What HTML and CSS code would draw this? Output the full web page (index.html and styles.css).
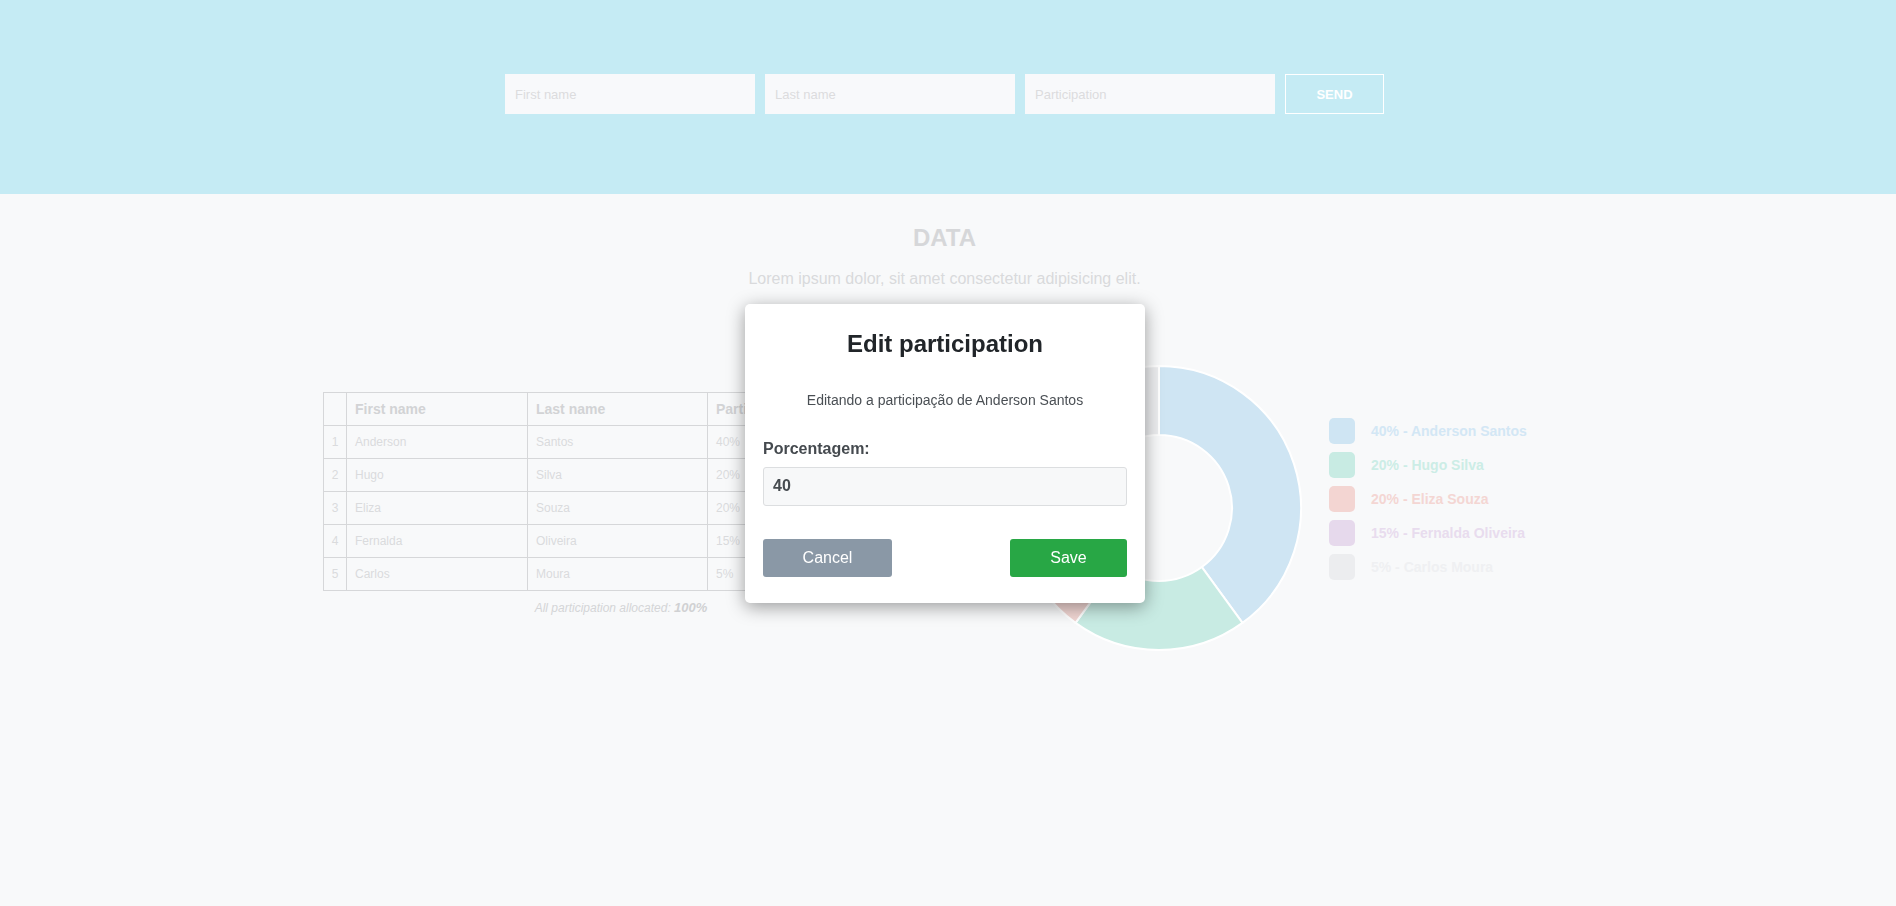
FILE: index.html
```html
<!DOCTYPE html>
<html lang="en">
<head>
<meta charset="utf-8">
<title>Participation</title>
<link rel="stylesheet" href="styles.css">
</head>
<body>
<header class="top">
  <form class="entry">
    <input class="field" type="text" placeholder="First name">
    <input class="field" type="text" placeholder="Last name">
    <input class="field" type="text" placeholder="Participation">
    <button class="send" type="button">SEND</button>
  </form>
</header>

<main class="main">
  <h1 class="title">DATA</h1>
  <p class="lead">Lorem ipsum dolor, sit amet consectetur adipisicing elit.</p>

  <div class="row">
    <div class="table-block">
      <table class="grid">
        <colgroup>
          <col class="c-num"><col class="c-first"><col class="c-last"><col class="c-part">
        </colgroup>
        <thead>
          <tr><th></th><th>First name</th><th>Last name</th><th>Participation</th></tr>
        </thead>
        <tbody>
          <tr><td class="num">1</td><td>Anderson</td><td>Santos</td><td>40%</td></tr>
          <tr><td class="num">2</td><td>Hugo</td><td>Silva</td><td>20%</td></tr>
          <tr><td class="num">3</td><td>Eliza</td><td>Souza</td><td>20%</td></tr>
          <tr><td class="num">4</td><td>Fernalda</td><td>Oliveira</td><td>15%</td></tr>
          <tr><td class="num">5</td><td>Carlos</td><td>Moura</td><td>5%</td></tr>
        </tbody>
      </table>
      <p class="allocated">All participation allocated: <b>100%</b></p>
    </div>

    <svg class="donut" width="286" height="286" viewBox="0 0 286 286">
      <path class="s-blue" d="M143,1 A142,142 0 0 1 226.47,257.88 L185.91,202.06 A73,73 0 0 0 143,70 Z"/>
      <path class="s-green" d="M226.47,257.88 A142,142 0 0 1 59.53,257.88 L100.09,202.06 A73,73 0 0 0 185.91,202.06 Z"/>
      <path class="s-red" d="M59.53,257.88 A142,142 0 0 1 7.95,99.12 L73.57,120.44 A73,73 0 0 0 100.09,202.06 Z"/>
      <path class="s-purple" d="M7.95,99.12 A142,142 0 0 1 99.12,7.95 L120.44,73.57 A73,73 0 0 0 73.57,120.44 Z"/>
      <path class="s-gray" d="M99.12,7.95 A142,142 0 0 1 143,1 L143,70 A73,73 0 0 0 120.44,73.57 Z"/>
    </svg>

    <ul class="legend">
      <li class="l-blue"><span class="sw"></span>40% - Anderson Santos</li>
      <li class="l-green"><span class="sw"></span>20% - Hugo Silva</li>
      <li class="l-red"><span class="sw"></span>20% - Eliza Souza</li>
      <li class="l-purple"><span class="sw"></span>15% - Fernalda Oliveira</li>
      <li class="l-gray"><span class="sw"></span>5% - Carlos Moura</li>
    </ul>
  </div>
</main>

<div class="backdrop">
  <div class="modal" role="dialog">
    <h2 class="m-title">Edit participation</h2>
    <p class="m-sub">Editando a participação de Anderson Santos</p>
    <label class="m-label" for="pct">Porcentagem:</label>
    <input class="m-input" id="pct" type="text" value="40">
    <div class="m-actions">
      <button class="btn btn-cancel" type="button">Cancel</button>
      <button class="btn btn-save" type="button">Save</button>
    </div>
  </div>
</div>
</body>
</html>
```

FILE: styles.css
```css
* { box-sizing: border-box; }

html, body {
  margin: 0;
  padding: 0;
  height: 100%;
}

body {
  background: #f8f9fa;
  font-family: "Liberation Sans", Arial, sans-serif;
  overflow: hidden;
}

/* ---------- header ---------- */
.top {
  background: #c5ebf4;
  height: 194px;
  padding: 74px 7px 0 0;
}

.entry {
  display: flex;
  justify-content: center;
  gap: 10px;
  margin: 0;
}

.field {
  width: 250px;
  height: 40px;
  border: none;
  background: #f8f9fb;
  padding: 0 10px;
  font-family: "Liberation Sans", Arial, sans-serif;
  font-size: 13px;
  color: #d9d9db;
  outline: none;
}

.field::placeholder { color: #dcdcde; }

.send {
  width: 99px;
  height: 40px;
  background: transparent;
  border: 1px solid #ffffff;
  color: #ffffff;
  font-family: "Liberation Sans", Arial, sans-serif;
  font-weight: bold;
  font-size: 13px;
  padding: 0;
}

/* ---------- main ---------- */
.main {
  padding: 30px 7px 0 0;
}

.title {
  margin: 0;
  text-align: center;
  font-size: 24px;
  line-height: 28px;
  font-weight: bold;
  color: #d6d7d9;
}

.lead {
  margin: 18px 0 0;
  text-align: center;
  font-size: 16px;
  line-height: 18px;
  color: #d9dadc;
}

.row {
  display: flex;
  justify-content: center;
  align-items: flex-start;
  margin-top: 77px;
}

.table-block {
  width: 596px;
  margin-top: 27px;
}

.grid {
  width: 596px;
  border-collapse: collapse;
  table-layout: fixed;
}

.c-num { width: 23px; }
.c-first { width: 181px; }
.c-last { width: 180px; }
.c-part { width: 212px; }

.grid th,
.grid td {
  border: 1px solid #d6d7d9;
  padding: 8px 8px;
  line-height: 16px;
  text-align: left;
  white-space: nowrap;
  overflow: hidden;
}

.grid th {
  font-size: 14px;
  font-weight: bold;
  color: #d2d3d5;
}

.grid td {
  font-size: 12px;
  color: #dadbdd;
}

.grid td.num {
  text-align: center;
  padding: 8px 0;
}

.allocated {
  margin: 9px 0 0;
  text-align: center;
  font-size: 12px;
  font-style: italic;
  color: #d4d5d7;
}

.allocated b {
  font-size: 13px;
  color: #d0d1d3;
}

.donut {
  display: block;
  margin-left: 97px;
  flex: none;
}

.donut path {
  stroke: #ffffff;
  stroke-width: 2;
}

.s-blue { fill: #cfe5f3; }
.s-green { fill: #c8ebe3; }
.s-red { fill: #f1d6d3; }
.s-purple { fill: #e6d9ec; }
.s-gray { fill: #ecedef; }

.legend {
  list-style: none;
  margin: 53px 0 0 27px;
  padding: 0;
  width: 237px;
  display: flex;
  flex-direction: column;
  gap: 8px;
}

.legend li {
  display: flex;
  align-items: center;
  height: 26px;
  font-size: 14px;
  font-weight: bold;
  white-space: nowrap;
}

.sw {
  width: 26px;
  height: 26px;
  border-radius: 5px;
  margin-right: 16px;
  flex: none;
}

.l-blue { color: #d3e7f5; }
.l-blue .sw { background: #cfe5f3; }
.l-green { color: #ccede6; }
.l-green .sw { background: #c8ebe3; }
.l-red { color: #f4d6d3; }
.l-red .sw { background: #f3d5d2; }
.l-purple { color: #e8dcee; }
.l-purple .sw { background: #e6d9ec; }
.l-gray { color: #eff0f2; }
.l-gray .sw { background: #ecedef; }

/* ---------- modal ---------- */
.backdrop {
  position: fixed;
  inset: 0;
  display: flex;
  justify-content: center;
  align-items: center;
  padding: 0 6px 0 0;
  background: transparent;
}

.modal {
  width: 400px;
  background: #ffffff;
  border-radius: 5px;
  box-shadow: 0 4px 18px rgba(0, 0, 0, 0.38);
  padding: 26px 18px 26px;
  display: flex;
  flex-direction: column;
}

.m-title {
  margin: 0;
  text-align: center;
  font-size: 24px;
  line-height: 28px;
  font-weight: bold;
  color: #212529;
}

.m-sub {
  margin: 34px 0 0;
  text-align: center;
  font-size: 14px;
  line-height: 16px;
  color: #4a4f54;
}

.m-label {
  margin-top: 32px;
  font-size: 16px;
  line-height: 18px;
  font-weight: bold;
  color: #454a4f;
}

.m-input {
  margin-top: 9px;
  height: 39px;
  width: 100%;
  border: 1px solid #dcdee0;
  border-radius: 3px;
  background: #f7f8f9;
  padding: 0 9px;
  font-family: "Liberation Sans", Arial, sans-serif;
  font-size: 16px;
  font-weight: bold;
  color: #464b50;
  outline: none;
}

.m-actions {
  margin-top: 33px;
  display: flex;
  justify-content: space-between;
}

.btn {
  height: 38px;
  border: none;
  border-radius: 3px;
  font-family: "Liberation Sans", Arial, sans-serif;
  font-size: 16px;
  color: #ffffff;
  padding: 0;
}

.btn-cancel {
  width: 129px;
  background: #8a98a6;
}

.btn-save {
  width: 117px;
  background: #28a745;
}
```
